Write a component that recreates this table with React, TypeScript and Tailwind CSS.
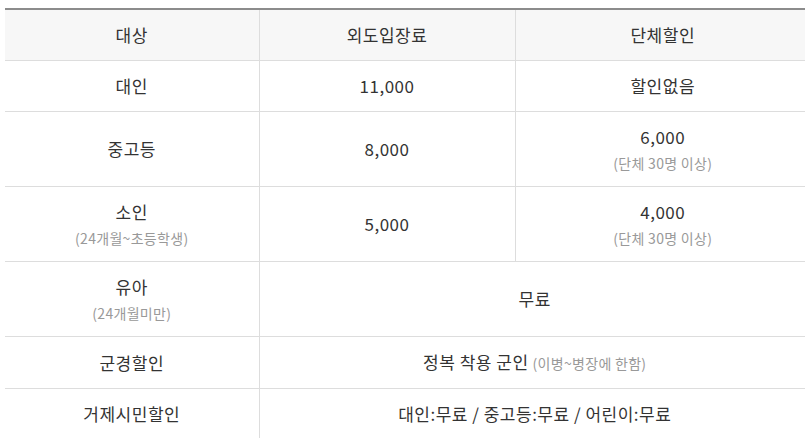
const rows: { label: string; labelSub?: string; cells: { main: string; sub?: string; inlineSub?: string; span?: number }[] }[] = [
  { label: '대인', cells: [{ main: '11,000' }, { main: '할인없음' }] },
  { label: '중고등', cells: [{ main: '8,000' }, { main: '6,000', sub: '(단체 30명 이상)' }] },
  { label: '소인', labelSub: '(24개월~초등학생)', cells: [{ main: '5,000' }, { main: '4,000', sub: '(단체 30명 이상)' }] },
  { label: '유아', labelSub: '(24개월미만)', cells: [{ main: '무료', span: 2 }] },
  { label: '군경할인', cells: [{ main: '정복 착용 군인', inlineSub: '(이병~병장에 한함)', span: 2 }] },
  { label: '거제시민할인', cells: [{ main: '대인:무료 / 중고등:무료 / 어린이:무료', span: 2 }] },
]

export default function App() {
  return (
    <div
      className="w-[805px] h-[438px] overflow-hidden bg-white pt-2 pl-[5px]"
      style={{ fontFamily: '"Noto Sans CJK KR", "Noto Sans", sans-serif' }}
    >
      <table className="w-[805px] table-fixed border-collapse border-t-2 border-t-[#8c8c8c] text-[17px] leading-6 tracking-[0.5px] text-[#333]">
        <colgroup>
          <col className="w-[254px]" />
          <col className="w-[256px]" />
          <col />
        </colgroup>
        <thead>
          <tr className="bg-[#f7f7f7]">
            <th className="border-b border-r border-[#ddd] py-[13px] font-normal">대상</th>
            <th className="border-b border-r border-[#ddd] py-[13px] font-normal">외도입장료</th>
            <th className="border-b border-[#ddd] py-[13px] font-normal">단체할인</th>
          </tr>
        </thead>
        <tbody>
          {rows.map((row) => (
            <tr key={row.label}>
              <td className="border-b border-r border-[#ddd] py-[13px] text-center">
                <div>{row.label}</div>
                {row.labelSub && <div className="mt-1 text-[14px] leading-5 tracking-[0.3px] text-[#999]">{row.labelSub}</div>}
              </td>
              {row.cells.map((c, i) => (
                <td
                  key={i}
                  colSpan={c.span}
                  className={`border-b border-[#ddd] py-[13px] text-center ${i === 0 && !c.span ? 'border-r' : ''}`}
                >
                  <div>
                    {c.main}
                    {c.inlineSub && <span className="ml-1 text-[14px] tracking-[0.3px] text-[#999]">{c.inlineSub}</span>}
                  </div>
                  {c.sub && <div className="mt-1 text-[14px] leading-5 tracking-[0.3px] text-[#999]">{c.sub}</div>}
                </td>
              ))}
            </tr>
          ))}
        </tbody>
      </table>
    </div>
  )
}
